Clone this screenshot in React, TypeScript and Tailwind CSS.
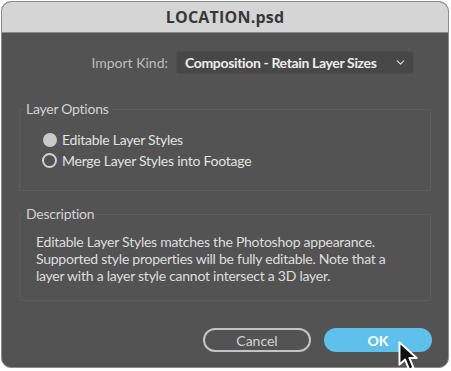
import { ChevronDown } from 'lucide-react';

const font = { fontFamily: 'Lato, "Noto Sans", sans-serif' };

function Radio({ checked, label }: { checked: boolean; label: string }) {
    return (
        <div className="flex items-center gap-[5px] h-[21px]">
            {checked ? (
                <div className="w-[14px] h-[14px] rounded-full bg-[#c9c9c9]"></div>
            ) : (
                <div className="w-[15px] h-[15px] rounded-full border-2 border-[#d0d0d0]"></div>
            )}
            <span className="text-[14px] tracking-[-0.25px] text-[#e2e2e2]">{label}</span>
        </div>
    );
}

export default function App() {
    return (
        <div className="w-[451px] h-[371px] bg-white relative overflow-hidden" style={font}>
            <div className="ml-[1px] mt-[1px] w-[448px] h-[367px] rounded-[10px] border border-[#8c8c8c] bg-[#535353] overflow-hidden flex flex-col">
                {/* Title bar */}
                <div className="h-[31px] shrink-0 bg-[#d5d5d5] border-b border-[#8a8a8a] flex items-center justify-center">
                    <span className="text-[16px] font-bold text-[#383838] tracking-[0.2px]" style={{ fontFamily: '"Open Sans", sans-serif' }}>LOCATION.psd</span>
                </div>

                {/* Import kind */}
                <div className="flex items-center justify-end pr-[34px] mt-[18px] gap-[8px] h-[23px]">
                    <span className="text-[14px] text-[#bdbdbd]">Import Kind:</span>
                    <div className="w-[238px] h-[23px] rounded-[3px] bg-[#474747] border border-[#4d4d4d] flex items-center justify-between pl-[8px] pr-[6px]">
                        <span className="text-[14px] font-bold tracking-[-0.35px] text-[#ececec] whitespace-nowrap">Composition - Retain Layer Sizes</span>
                        <ChevronDown size={13} strokeWidth={2.2} className="text-[#d8d8d8]" />
                    </div>
                </div>

                {/* Layer Options */}
                <fieldset className="mx-[17px] mt-[25px] h-[92px] shrink-0 border border-[#5e5e5e] rounded-[2px] px-[22px] pt-[10px]">
                    <legend className="ml-[-19px] px-[3px] text-[14px] leading-[20px] tracking-[-0.25px] text-[#d2d2d2]">Layer Options</legend>
                    <div className="flex flex-col">
                        <div className="ml-[1px]"><Radio checked label="Editable Layer Styles" /></div>
                        <Radio checked={false} label="Merge Layer Styles into Footage" />
                    </div>
                </fieldset>

                {/* Description */}
                <fieldset className="mx-[17px] mt-[13px] h-[97px] shrink-0 border border-[#5e5e5e] rounded-[2px] px-[16px] pt-[9px]">
                    <legend className="ml-[-13px] px-[3px] text-[14px] leading-[20px] tracking-[-0.25px] text-[#d2d2d2]">Description</legend>
                    <p className="text-[14px] leading-[17px] tracking-[-0.25px] text-[#dedede]">
                        Editable Layer Styles matches the Photoshop appearance.<br />
                        Supported style properties will be fully editable. Note that a<br />
                        layer with a layer style cannot intersect a 3D layer.
                    </p>
                </fieldset>

                {/* Buttons */}
                <div className="flex justify-end gap-[13px] pr-[16px] mt-[27px]">
                    <button className="w-[108px] h-[24px] rounded-full border-2 border-[#c4c4c4] text-[14px] text-[#d4d4d4] flex items-center justify-center">Cancel</button>
                    <button className="w-[108px] h-[24px] rounded-full bg-[#5fc0ec] text-[14px] font-bold text-white flex items-center justify-center">OK</button>
                </div>
            </div>

            {/* Cursor */}
            <svg className="absolute left-[398px] top-[341px]" width="28" height="32" viewBox="0 0 20 23">
                <path d="M1 1 L1 17 L5 13.3 L8 20.5 L11 19.2 L8.1 12.2 L13.4 12.2 Z" fill="#111" stroke="#fff" strokeWidth="1.4" strokeLinejoin="round" />
            </svg>
        </div>
    );
}
